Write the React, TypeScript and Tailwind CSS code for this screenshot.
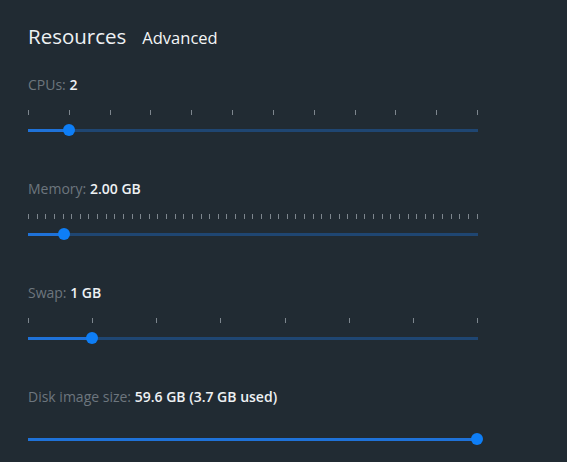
import React from 'react';

type Setting = {
  label: string;
  value: string;
  ticks: number;
  fraction: number;
};

const settings: Setting[] = [
  { label: 'CPUs:', value: '2', ticks: 12, fraction: 1 / 11 },
  { label: 'Memory:', value: '2.00 GB', ticks: 53, fraction: 36 / 449 },
  { label: 'Swap:', value: '1 GB', ticks: 8, fraction: 1 / 7 },
  { label: 'Disk image size:', value: '59.6 GB (3.7 GB used)', ticks: 0, fraction: 1 },
];

function Slider({ ticks, fraction }: { ticks: number; fraction: number }) {
  const pos = fraction * 449;
  return (
    <div className="relative h-[27px] w-[450px]">
      {ticks > 0 && (
        <div className="flex h-[5px] justify-between">
          {Array.from({ length: ticks }).map((_, i) => (
            <span key={i} className="h-[5px] w-px bg-[#7d868e]" />
          ))}
        </div>
      )}
      <div className="absolute left-0 top-[19px] h-[3px] w-[450px] bg-[#1f4672]" />
      <div className="absolute left-0 top-[19px] h-[3px] bg-[#1f72d8]" style={{ width: pos }} />
      <div
        className="absolute top-[14px] h-[12px] w-[12px] rounded-full bg-[#0e7ef6]"
        style={{ left: pos - 6 }}
      />
    </div>
  );
}

export default function App() {
  return (
    <div className="h-[462px] w-[567px] overflow-hidden bg-[#212b33] pl-[28px] pt-[22px] font-['Open_Sans',sans-serif]">
      <div className="flex h-[28px] items-baseline gap-[16px]">
        <h1 className="text-[20.5px] leading-[28px] text-[#eef1f3]">Resources</h1>
        <span className="text-[16.5px] font-medium text-[#f4f6f7]">Advanced</span>
      </div>
      <div className="mt-[26px]">
        {settings.map((s) => (
          <div key={s.label} className="h-[104px]">
            <div className="text-[14px] leading-[18px]">
              <span className="text-[#6d767e]">{s.label} </span>
              <span className="font-semibold text-[#eef1f3]">{s.value}</span>
            </div>
            <div className={s.ticks > 0 ? 'mt-[16px]' : 'mt-[13px]'}>
              <Slider ticks={s.ticks} fraction={s.fraction} />
            </div>
          </div>
        ))}
      </div>
    </div>
  );
}
